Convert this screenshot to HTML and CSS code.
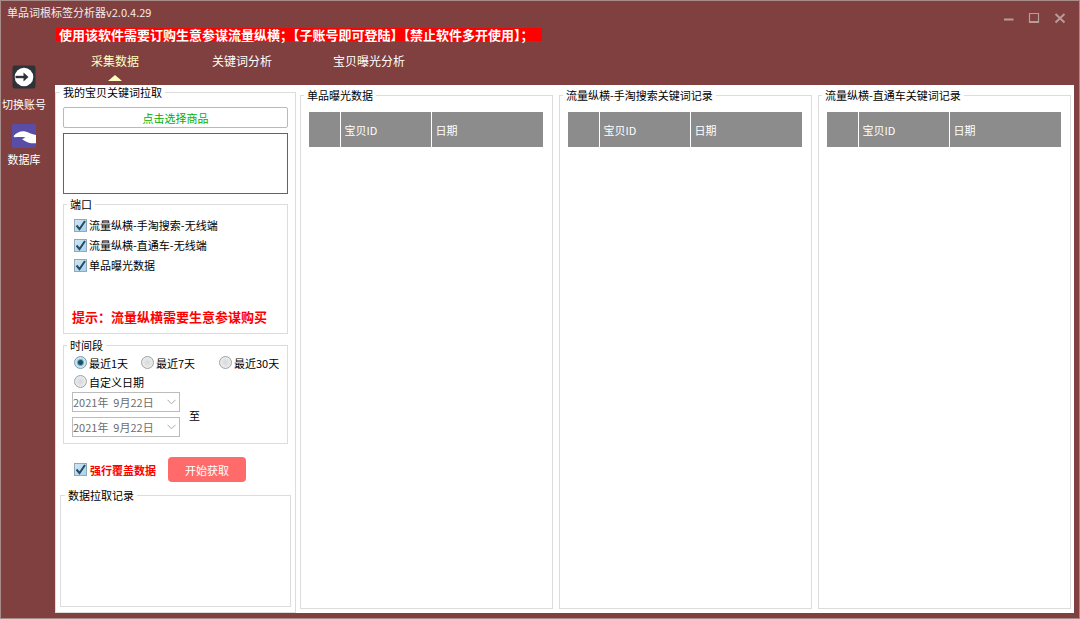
FILE: index.html
```html
<!DOCTYPE html>
<html lang="zh-CN">
<head>
<meta charset="utf-8">
<meta name="viewport" content="width=device-width, initial-scale=1">
<title>单品词根标签分析器v2.0.4.29</title>
<link rel="stylesheet" href="styles.css">
</head>
<body>
<div class="window">
  <header class="titlebar">
    <h1 class="title">单品词根标签分析器v2.0.4.29</h1>
    <div class="controls">
      <button type="button" class="control" aria-label="最小化"><svg viewBox="0 0 12 12"><path d="M2 7.500h9.500" stroke="#b89c98" stroke-width="2"/></svg></button>
      <button type="button" class="control" aria-label="最大化"><svg viewBox="0 0 12 12"><path d="M1.500 1.500h9v9h-9zM1.500 9.500h9" fill="none" stroke="#b89c98" stroke-width="1.200"/></svg></button>
      <button type="button" class="control" aria-label="关闭"><svg viewBox="0 0 12 12"><path d="M1.500 2l9 8.500M10.500 2l-9 8.500" stroke="#b89c98" stroke-width="2"/></svg></button>
    </div>
  </header>
  <div class="body">
    <aside class="side">
      <button type="button" class="side-item">
        <svg class="side-icon" viewBox="0 0 24 24"><rect x="0.500" y="0.500" width="23" height="23" rx="2" fill="#2e3338"/><circle cx="12" cy="12" r="9.300" fill="#fff"/><path d="M3.500 12h11" stroke="#2e3338" stroke-width="2.400"/><path d="M11.500 7.500L16.500 12l-5 4.500z" fill="#2e3338"/></svg>
        <span>切换账号</span>
      </button>
      <button type="button" class="side-item">
        <svg class="side-icon" viewBox="0 0 24 24"><rect width="24" height="24" rx="2" fill="#5a4da8"/><path d="M2 11.500C4.500 8.500 8.500 6.800 12 7.200c4 .5 6 2.600 12 3.800v8.200c-4.500.4-8-.2-11-2.200l-3-1.800 3.500-1.700C10 12.600 6 13 3 13.200c-1.200 0-1.700-.8-1-1.700z" fill="#fff"/></svg>
        <span>数据库</span>
      </button>
    </aside>
    <div class="content">
      <p class="banner"><strong>使用该软件需要订购生意参谋流量纵横；【子账号即可登陆】【禁止软件多开使用】；</strong></p>
      <nav class="tabs">
        <a class="tab tab-active" href="#collect">采集数据</a>
        <a class="tab" href="#keywords">关键词分析</a>
        <a class="tab" href="#exposure">宝贝曝光分析</a>
      </nav>
      <main class="panel" id="collect">
        <fieldset class="group pull">
          <legend>我的宝贝关键词拉取</legend>
          <button type="button" class="choose">点击选择商品</button>
          <textarea class="goods" aria-label="已选商品"></textarea>
          <fieldset class="group ports">
            <legend>端口</legend>
            <label class="option"><input type="checkbox" class="check" checked>流量纵横-手淘搜索-无线端</label>
            <label class="option"><input type="checkbox" class="check" checked>流量纵横-直通车-无线端</label>
            <label class="option"><input type="checkbox" class="check" checked>单品曝光数据</label>
            <p class="hint">提示：流量纵横需要生意参谋购买</p>
          </fieldset>
          <fieldset class="group period">
            <legend>时间段</legend>
            <div class="radios">
              <label class="option"><input type="radio" class="radio" name="period" checked>最近1天</label>
              <label class="option"><input type="radio" class="radio" name="period">最近7天</label>
              <label class="option"><input type="radio" class="radio" name="period">最近30天</label>
              <label class="option"><input type="radio" class="radio" name="period">自定义日期</label>
            </div>
            <div class="range">
              <div class="dates">
                <select class="date" aria-label="开始日期"><option>2021年&nbsp; 9月22日</option></select>
                <select class="date" aria-label="结束日期"><option>2021年&nbsp; 9月22日</option></select>
              </div>
              <span>至</span>
            </div>
          </fieldset>
          <div class="actions">
            <label class="option overwrite"><input type="checkbox" class="check" checked>强行覆盖数据</label>
            <button type="button" class="start">开始获取</button>
          </div>
          <fieldset class="group log">
            <legend>数据拉取记录</legend>
          </fieldset>
        </fieldset>
        <div class="records">
          <fieldset class="group record">
            <legend>单品曝光数据</legend>
            <table class="table"><thead><tr><th class="col-no"></th><th class="col-id">宝贝ID</th><th>日期</th></tr></thead></table>
          </fieldset>
          <fieldset class="group record">
            <legend>流量纵横-手淘搜索关键词记录</legend>
            <table class="table"><thead><tr><th class="col-no"></th><th class="col-id">宝贝ID</th><th>日期</th></tr></thead></table>
          </fieldset>
          <fieldset class="group record">
            <legend>流量纵横-直通车关键词记录</legend>
            <table class="table"><thead><tr><th class="col-no"></th><th class="col-id">宝贝ID</th><th>日期</th></tr></thead></table>
          </fieldset>
        </div>
      </main>
    </div>
  </div>
</div>
</body>
</html>
```
FILE: styles.css
```css
* { box-sizing: border-box; }

body {
  margin: 0;
  font: 11px/14px "Noto Sans CJK SC", sans-serif;
  color: #000;
}

button, select, textarea { font: inherit; margin: 0; }
button { border: 0; padding: 0; background: none; color: inherit; }
p, h1 { margin: 0; }

.window {
  min-height: 100vh;
  display: flex;
  flex-direction: column;
  background: #804040;
  border: 1px solid #a88c8a;
  padding: 0 5px 5px 0;
}

.titlebar {
  display: flex;
  justify-content: space-between;
  height: 26px;
  padding: 4px 3px 0 6px;
}
.title { font-size: 11px; line-height: 14px; font-weight: 400; color: #f4eaea; }
.controls { display: flex; gap: 14px; padding: 7px 5px 0 0; }
.control { width: 12px; height: 12px; }
.control svg { display: block; width: 12px; height: 12px; }

.body { flex: 1; display: flex; }
.side {
  width: 54px;
  padding: 38px 8px 0 0;
  display: flex;
  flex-direction: column;
  gap: 5px;
  color: #fff;
}
.side-item { display: flex; flex-direction: column; align-items: center; gap: 8px; white-space: nowrap; }
.side-item + .side-item { padding-top: 8px; gap: 4px; }
.side-icon { width: 24px; height: 24px; }

.content { flex: 1; min-width: 0; display: flex; flex-direction: column; }
.banner { padding: 1px 0 0 1px; font-size: 13px; line-height: 13px; color: #fff; }
.banner strong { display: inline-block; background: #f00; padding: 0 8px 0 3px; }

.tabs { display: flex; gap: 7px; height: 44px; padding-top: 11px; }
.tab {
  width: 120px;
  display: flex;
  flex-direction: column;
  align-items: center;
  gap: 5px;
  font-size: 12px;
  line-height: 18px;
  color: #fff;
  text-decoration: none;
}
.tab-active { color: #ffffc0; }
.tab-active::after {
  content: "";
  border: 7px solid transparent;
  border-top: 0;
  border-bottom: 6px solid #ffffc0;
}

.panel {
  flex: 1;
  display: flex;
  gap: 4px;
  background: #fff;
  padding: 0 3px 0 0;
}

.group {
  min-width: 0;
  margin: 0;
  padding: 0;
  border: 1px solid #dcdcdc;
}
.group > legend { margin-left: 4px; padding: 0 3px; }

.pull {
  width: 241px;
  display: flex;
  flex-direction: column;
  padding: 8px 7px 5px;
}
.pull > legend { margin-left: -3px; }
.choose {
  height: 21px;
  border: 1px solid #8fc7e8;
  border-radius: 2px;
  color: #00b000;
  background: #fff;
}
.goods {
  height: 61px;
  margin-top: 5px;
  border: 1px solid #646464;
  border-radius: 0;
  resize: none;
}

.option { display: flex; align-items: center; gap: 2px; white-space: nowrap; }
.check, .radio {
  appearance: none;
  flex: none;
  width: 13px;
  height: 13px;
  margin: 0;
  border: 1px solid #9aa4aa;
}
.check {
  border-color: #8fa9b8;
  background: url("data:image/svg+xml,%3Csvg xmlns='http://www.w3.org/2000/svg' viewBox='0 0 11 11'%3E%3Cpath d='M1.500 5.500L4.500 9 10 1' fill='none' stroke='%23264b66' stroke-width='2'/%3E%3C/svg%3E"), linear-gradient(135deg, #cfe6f2, #a9d3ea);
}
.radio { border-radius: 50%; background: radial-gradient(#d8d8d8, #f4f4f4); }
.radio:checked {
  border-color: #7b9cae;
  background: radial-gradient(#1d4f68 0 2px, #6fa8c2 3px, #c9e4f0 4px);
}

.ports { margin-top: 3px; padding: 4px 9px 7px 10px; }
.ports > legend { margin-left: -7px; }
.ports .option { height: 20px; }
.hint {
  margin-top: 33px;
  margin-left: -2px;
  font-size: 13px;
  line-height: 18px;
  font-weight: 700;
  color: #f00;
  white-space: nowrap;
}

.period { margin-top: 4px; padding: 1px 6px 6px 8px; }
.period > legend { margin-left: -5px; }
.radios {
  display: grid;
  grid-template-columns: 67px 78px 1fr;
  grid-auto-rows: 19px;
  padding: 0 0 0 2px;
}
.radios .option:last-child { grid-column: 1 / 3; }
.range { display: flex; align-items: center; gap: 9px; padding-top: 1px; }
.dates { display: grid; gap: 5px; }
.date {
  appearance: none;
  width: 108px;
  height: 20px;
  padding: 0 0 1px;
  border: 1px solid #bcbcbc;
  border-radius: 0;
  color: #6d6d6d;
  background: #fff url("data:image/svg+xml,%3Csvg xmlns='http://www.w3.org/2000/svg' viewBox='0 0 9 6'%3E%3Cpath d='M.5.8l4 4 4-4' fill='none' stroke='%23a8a8a8'/%3E%3C/svg%3E") right 3px center / 9px 6px no-repeat;
}

.actions { display: flex; gap: 12px; align-items: center; margin: 13px 0 6px; padding-left: 11px; }
.overwrite { gap: 3px; color: #f00; font-weight: 700; }
.start { width: 78px; height: 25px; border-radius: 4px; background: #ff6b6b; color: #fff; }

.log { flex: 1; margin: 0 -3px; }

.records {
  flex: 1;
  min-width: 0;
  display: grid;
  grid-template-columns: repeat(3, 1fr);
  gap: 6px;
  padding: 3px 0 4px;
}
.record { padding: 10px 9px 9px 8px; }
.record > legend { margin-left: -5px; }
.table { width: 100%; border-collapse: collapse; table-layout: fixed; color: #fff; }
.table th {
  height: 35px;
  padding: 0 4px;
  background: #8c8c8c;
  font-weight: 400;
  text-align: left;
}
.table th + th { border-left: 1px solid #fff; }
.col-no { width: 31px; }
.col-id { width: 91px; }
```
